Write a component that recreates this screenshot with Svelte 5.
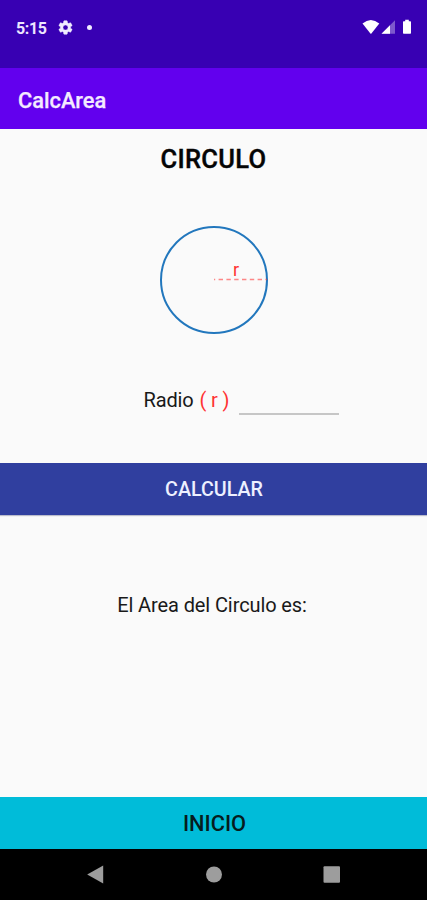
<script>
  let radius = $state('');
</script>

<div class="phone">
  <header class="status">
    <span class="clock">5:15</span>
    <svg class="gear" width="17" height="17" viewBox="0 0 24 24" aria-hidden="true">
      <path fill="#f1ecff" stroke="#f1ecff" stroke-width=".7" fill-rule="evenodd" d="M19.14 12.94c.04-.3.06-.61.06-.94s-.02-.64-.07-.94l2.03-1.58c.18-.14.23-.41.12-.61l-1.92-3.32c-.12-.22-.37-.29-.59-.22l-2.39.96c-.5-.38-1.03-.7-1.62-.94L14.4 2.81c-.04-.24-.24-.41-.48-.41h-3.84c-.24 0-.43.17-.47.41l-.36 2.54c-.59.24-1.13.57-1.62.94l-2.39-.96c-.22-.08-.47 0-.59.22L2.74 8.87c-.12.21-.08.47.12.61l2.03 1.58c-.05.3-.09.63-.09.94s.02.64.07.94l-2.03 1.58c-.18.14-.23.41-.12.61l1.92 3.32c.12.22.37.29.59.22l2.39-.96c.5.38 1.03.7 1.62.94l.36 2.54c.05.24.24.41.48.41h3.84c.24 0 .44-.17.47-.41l.36-2.54c.59-.24 1.13-.56 1.62-.94l2.39.96c.22.08.47 0 .59-.22l1.92-3.32c.12-.22.07-.47-.12-.61l-2.01-1.58zM12 15.6A3.6 3.6 0 1 1 12 8.4a3.6 3.6 0 0 1 0 7.2z" />
    </svg>
    <span class="dot"></span>
    <svg class="signals" width="52" height="18" viewBox="0 0 52 18" aria-hidden="true">
      <path fill="#fff" d="M.5 5.6Q8.9-1.4 17.3 5.6L9.4 15.6Q8.9 16.1 8.4 15.6Z" />
      <path fill="#fff" fill-opacity=".35" d="M19.5 15.8 33 2.2V15.8Z" />
      <path fill="#fff" d="M19.5 15.8 28 7.2V15.8Z" />
      <path fill="#fff" d="M43.2 1.8h3.6v1.4h1.5q.7 0 .7.7v11.2q0 .7-.7.7h-6.6q-.7 0-.7-.7V3.9q0-.7.7-.7h1.5Z" />
    </svg>
  </header>

  <div class="appbar"><span>CalcArea</span></div>

  <main>
    <h1>CIRCULO</h1>
    <svg class="figure" width="110" height="110" viewBox="0 0 110 110">
      <circle cx="55" cy="55" r="53" fill="none" stroke="#2277bd" stroke-width="2" />
      <path d="M55 54.5H108" stroke="#ff3a3a" stroke-opacity=".6" stroke-width="1.5" stroke-dasharray="4.4 3.4" stroke-dashoffset="3.2" />
      <text x="74" y="50.5">r</text>
    </svg>

    <label class="field">
      <span class="name">Radio</span>
      <span class="symbol">( r )</span>
      <input type="text" inputmode="decimal" aria-label="Radio" bind:value={radius} />
    </label>

    <button class="calc"><span>CALCULAR</span></button>
    <p><span>El Area del Circulo es:</span></p>
    <button class="home"><span>INICIO</span></button>
  </main>

  <nav>
    <svg width="427" height="51" viewBox="0 0 427 51" fill="#9d9d9d">
      <path d="M87.2 25.5 103.2 16.5V34.5Z" />
      <circle cx="214" cy="25.5" r="8" />
      <rect x="323.5" y="17.3" width="16.5" height="16.5" rx="1" />
    </svg>
  </nav>
</div>

<style>
  .phone {
    width: 427px;
    height: 900px;
    display: flex;
    flex-direction: column;
    overflow: hidden;
    background: #fafafa;
    font-family: Roboto, "Liberation Sans", sans-serif;
    color: #191919;
  }
  .status {
    box-sizing: border-box;
    height: 68px;
    padding: 18px 13px 0 16px;
    display: flex;
    align-items: flex-start;
    background: #3800b3;
  }
  .clock {
    width: 41px;
    padding-top: 1px;
    color: #ede6ff;
    font-size: 16px;
    font-weight: 700;
    line-height: 20px;
    letter-spacing: -0.4px;
  }
  .gear { margin-top: 1px; }
  .dot {
    width: 5px;
    height: 5px;
    margin: 7px 0 0 13px;
    border-radius: 50%;
    background: #f1ecff;
  }
  .signals { margin-left: auto; }
  .appbar {
    box-sizing: border-box;
    height: 61px;
    padding: 3px 18px 0;
    display: flex;
    align-items: center;
    background: #6200ee;
    color: #f4eaff;
    font-size: 21.8px;
    font-weight: 500;
    -webkit-text-stroke: 0.25px;
  }
  main {
    height: 720px;
    display: flex;
    flex-direction: column;
    align-items: center;
  }
  h1 {
    margin: 14px 0 0;
    font-size: 25.5px;
    font-weight: 500;
    line-height: 32px;
    letter-spacing: 0.3px;
    color: #050505;
    -webkit-text-stroke: 0.4px;
  }
  .figure { margin: 50px 0 0 1px; }
  .figure text {
    fill: #f33;
    font-size: 18px;
  }
  .field {
    width: 195px;
    height: 30px;
    margin: 50px 0 0 55px;
    display: flex;
    align-items: flex-start;
    font-size: 20px;
    line-height: 30px;
    letter-spacing: -0.15px;
  }
  .name { width: 56px; }
  .symbol {
    width: 39px;
    color: #f33;
  }
  input {
    box-sizing: border-box;
    width: 100px;
    height: 29.5px;
    padding: 0 4px;
    border: 0;
    border-bottom: 2px solid #c6c6c6;
    outline: none;
    background: transparent;
    font: inherit;
  }
  button {
    width: 100%;
    height: 52px;
    flex: none;
    padding: 1px 0 0;
    border: 0;
    font: 500 20px/51px Roboto, "Liberation Sans", sans-serif;
  }
  .calc {
    margin-top: 48px;
    background: #303f9f;
    color: #edf0ff;
    font-size: 19.7px;
    box-shadow: 0 1px 1px #bbbdcc;
  }
  .calc span { padding-left: 1px; }
  p {
    margin: 75px 0 0;
    font-size: 20px;
    line-height: 30px;
    letter-spacing: -0.1px;
  }
  p span { margin-right: 3px; }
  .home {
    margin-top: auto;
    padding-top: 2px;
    line-height: 50px;
    background: #00bcd9;
    color: #061c20;
    font-size: 21.8px;
  }
  .home span { padding-left: 2px; }
  nav {
    height: 51px;
    background: #000;
  }
  nav svg { display: block; }
</style>
